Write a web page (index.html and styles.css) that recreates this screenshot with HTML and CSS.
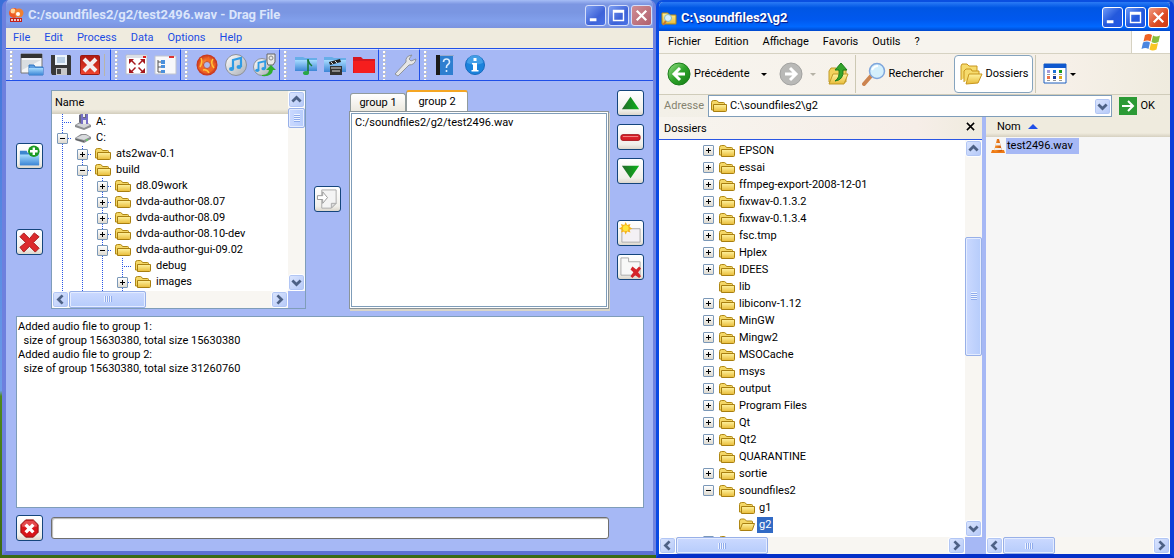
FILE: index.html
```html
<!DOCTYPE html>
<html lang="en">
<head>
<meta charset="utf-8">
<title>Drag File</title>
<link rel="stylesheet" href="styles.css">
</head>
<body>
<svg class="defs" aria-hidden="true">
  <defs>
    <linearGradient id="gold" x1="0" y1="0" x2="0" y2="1"><stop offset="0" stop-color="#fff3a0"/><stop offset="1" stop-color="#e8bb38"/></linearGradient>
    <linearGradient id="sky" x1="0" y1="0" x2="0" y2="1"><stop offset="0" stop-color="#a8dcff"/><stop offset="1" stop-color="#3c86d6"/></linearGradient>
    <linearGradient id="redg" x1="0" y1="0" x2="0" y2="1"><stop offset="0" stop-color="#b01810"/><stop offset="1" stop-color="#f0452f"/></linearGradient>
    <linearGradient id="greeng" x1="0" y1="0" x2="1" y2="1"><stop offset="0" stop-color="#9be08a"/><stop offset=".5" stop-color="#2da329"/><stop offset="1" stop-color="#137c14"/></linearGradient>
    <linearGradient id="darkgreen" x1="0" y1="0" x2="1" y2="0"><stop offset="0" stop-color="#23672b"/><stop offset="1" stop-color="#0bb51a"/></linearGradient>
    <linearGradient id="silver" x1="0" y1="0" x2="1" y2="1"><stop offset="0" stop-color="#ffffff"/><stop offset="1" stop-color="#a9aeb5"/></linearGradient>
    <radialGradient id="fire"><stop offset="0" stop-color="#ffd040"/><stop offset=".5" stop-color="#f4772c"/><stop offset="1" stop-color="#c5301c"/></radialGradient>
    <linearGradient id="cone" x1="0" y1="0" x2="1" y2="0"><stop offset="0" stop-color="#ff9a2e"/><stop offset="1" stop-color="#c94f00"/></linearGradient>
    <symbol id="folder" viewBox="0 0 16 16"><path d="M.5 12V4.500q0-2 2-2h3q1 0 2 2h5q1 0 1 1v7z" fill="#f4d767" stroke="#b08814"/><path d="M2.500 6.500h13v6q0 1-1 1h-12z" fill="url(#gold)" stroke="#a87f10"/></symbol>
    <symbol id="folder-open" viewBox="0 0 16 16"><path d="M.5 12V4q0-2 2-2h3l2 2h5q1 0 1 1v2" fill="#f4d767" stroke="#b08814"/><path d="M3.500 6.500h12l-2 6q0 1-1 1h-11q-1 0-.5-1z" fill="url(#gold)" stroke="#a87f10"/></symbol>
    <symbol id="drive" viewBox="0 0 16 16"><path d="M0 8l6-4h5l5 3v2l-7 4-9-3z" fill="#8c8e92"/><path d="M1 8l6-3h4l4 2-6 3z" fill="#d8dadd"/><path d="M1 9l8 2v1L1 10z" fill="#55585c"/><path d="M11 10h2" stroke="#4f4"/></symbol>
    <symbol id="floppy-drive" viewBox="0 0 16 16"><path d="M0 11l5-3h6l5 3v2l-7 3-9-3z" fill="#8c8e92"/><path d="M1 11l5-2h6l3 2-6 3z" fill="#d2d4d8"/><path d="M4 1l2-1h7v10H6l-2-2z" fill="#68697c"/><path d="M6 0h2v4h3V0h2v10H6z" fill="#7770c6"/><path d="M8 0h2v3H8zM8 6h3v4H8z" fill="#eee"/></symbol>
    <symbol id="left" viewBox="0 0 8 8"><path d="M5.500 1L2.500 4l3 3" fill="none" stroke="#4d6185" stroke-width="2"/></symbol>
    <symbol id="right" viewBox="0 0 8 8"><path d="M2.500 1l3 3-3 3" fill="none" stroke="#4d6185" stroke-width="2"/></symbol>
    <symbol id="up" viewBox="0 0 8 8"><path d="M1 5.500l3-3 3 3" fill="none" stroke="#4d6185" stroke-width="2"/></symbol>
    <symbol id="down" viewBox="0 0 8 8"><path d="M1 2.500l3 3 3-3" fill="none" stroke="#4d6185" stroke-width="2"/></symbol>
    <symbol id="min" viewBox="0 0 20 20"><path d="M4 13h7v3H4z" fill="#fff"/></symbol>
    <symbol id="max" viewBox="0 0 20 20"><path d="M4 4h12v12H4zM5.500 7v7.500h9V7z" fill="#fff" fill-rule="evenodd"/></symbol>
    <symbol id="close" viewBox="0 0 20 20"><path d="M5 5l10 10M15 5L5 15" stroke="#fff" stroke-width="2.400"/></symbol>
    <symbol id="note" viewBox="0 0 24 24"><path d="M9 16V7l8-2v9" fill="none" stroke="#2f9be4" stroke-width="2.200"/><ellipse cx="7.500" cy="16" rx="2.500" ry="2" fill="#2f9be4"/><ellipse cx="15" cy="14" rx="2.500" ry="2" fill="#2f9be4"/></symbol>
  </defs>
</svg>

<div class="desktop">
<section class="window app">
  <header class="titlebar">
    <svg class="i16" viewBox="0 0 16 16"><circle cx="6" cy="6" r="5" fill="#ef5a24"/><circle cx="5" cy="4" r="2.500" fill="#ffd9a0"/><circle cx="11" cy="6" r="4.500" fill="#f08030"/><circle cx="10" cy="7" r="2" fill="#fff"/><path d="M2 11h12v4H2z" fill="#c42018"/><path d="M3 13h10" stroke="#fff" stroke-width="1.500" stroke-dasharray="2 1"/></svg>
    <h1>C:/soundfiles2/g2/test2496.wav - Drag File</h1>
    <div class="winbtns">
      <button aria-label="Minimize"><svg><use href="#min"/></svg></button>
      <button aria-label="Maximize"><svg><use href="#max"/></svg></button>
      <button class="x" aria-label="Close"><svg><use href="#close"/></svg></button>
    </div>
  </header>
  <nav class="menu"><button>File</button><button>Edit</button><button>Process</button><button>Data</button><button>Options</button><button>Help</button></nav>
  <div class="toolbar">
    <div class="group sep">
      <button aria-label="Open"><svg viewBox="0 0 24 24"><path d="M1 1h21v19H1z" fill="#f4f5f6" stroke="#777"/><path d="M1 1h21v4H1z" fill="#333"/><path d="M2 7h19L2 17z" fill="#d9dde0"/><path d="M9 22V12h5l1 2h8v8z" fill="#5d9fe2" stroke="#2f74c0"/><path d="M9 15h14v7H9z" fill="url(#sky)"/></svg></button>
      <button aria-label="Save"><svg viewBox="0 0 24 24"><path d="M2 2h19l1 1v19H3l-1-2z" fill="#383838"/><path d="M6 2h12v10H6z" fill="#eef4fa"/><path d="M8 5h8M8 7h8M8 9h8" stroke="#86aacd"/><path d="M7 15h11v7H7z" fill="#c8c8c8"/><path d="M8 16h4v5H8z" fill="#444"/></svg></button>
      <button aria-label="Close file"><svg viewBox="0 0 24 24"><rect x="2.500" y="2.500" width="19" height="19" rx="1" fill="url(#redg)" stroke="#981b14"/><path d="M6 6l12 12M18 6L6 18" stroke="#f2efef" stroke-width="4"/></svg></button>
    </div>
    <div class="group">
      <button aria-label="Full screen"><svg viewBox="0 0 24 24"><path d="M1 2h21v19H1z" fill="#fff" stroke="#b8bcc8"/><path d="M2 3h19v2H2z" fill="#dcdfe6"/><path d="M18 3h3v2h-3z" fill="#e02020"/><path d="M4 6h5L7.500 7.500 11 11l-1 1-3.500-3.500L4 11zM20 6v5l-2.500-2.500L14 12l-1-1 3.500-3.500L15 6zM4 20v-5l2.500 2.500L10 14l1 1-3.500 3.500L9 20zM20 20v-5l-2.500 2.500L14 14l-1 1 3.500 3.500L15 20z" fill="#a6171c"/></svg></button>
      <button aria-label="Tree view"><svg viewBox="0 0 24 24"><path d="M1 3h21v18H1z" fill="#f8f8fa" stroke="#c0c4cf"/><path d="M15 3h5v2h-5z" fill="#d33"/><path d="M4 7v12h4M4 9h4M4 14h4" fill="none" stroke="#555"/><path d="M7 7h4v4H7zM7 12h4v3H7zM7 17h4v3H7z" fill="#4a90dc"/></svg></button>
    </div>
    <div class="group">
      <button aria-label="Burn"><svg viewBox="0 0 24 24"><circle cx="12" cy="12" r="10.500" fill="url(#fire)"/><path d="M3 15q2-6 4-8 0 4 3 5 0-5 4-9 0 5 3 6 1 3 4 1-1 7-7 10-6 2-11-5z" fill="#f26522" opacity=".8"/><path d="M6 5q2 4-1 9M18 6q-3 4 1 9M8 17q4-1 6 3" stroke="#ffc23a" stroke-width="1.500" fill="none"/><circle cx="12" cy="12" r="3.500" fill="#aeb8ea" stroke="#c9502c"/></svg></button>
      <button aria-label="Audio disc"><svg viewBox="0 0 24 24"><circle cx="12" cy="12" r="10.500" fill="url(#silver)" stroke="#8d9199"/><use href="#note" width="24" height="24"/></svg></button>
      <button aria-label="Extract audio"><svg viewBox="0 0 24 24"><circle cx="9" cy="14" r="8.500" fill="url(#silver)" stroke="#8d9199"/><use href="#note" x="-2" y="4" width="20" height="20"/><path d="M14 1h8v8l-2 3h-5l-1-3z" fill="#e8e8e8" stroke="#666"/><circle cx="18" cy="5" r="2" fill="none" stroke="#888"/><path d="M9 22q7 0 7-5h-3l5-5 5 5h-3q-1 7-11 6z" fill="#2fae2f"/></svg></button>
    </div>
    <div class="group">
      <button aria-label="Music folder"><svg viewBox="0 0 24 24"><path d="M1 4h8l2 1h12v13H1z" fill="#67aee8"/><path d="M1 7h22v11H1z" fill="url(#sky)"/><path d="M14 6v14" stroke="#167a35" stroke-width="1.500"/><path d="M14 7q1 4 4 6" stroke="#167a35" stroke-width="1.500" fill="none"/><ellipse cx="12" cy="20" rx="3" ry="2" fill="#28a745"/></svg></button>
      <button aria-label="Video folder"><svg viewBox="0 0 24 24"><path d="M1 4h8l2 1h12v14H1z" fill="#67aee8"/><path d="M1 7h22v12H1z" fill="url(#sky)"/><path d="M7 13h12v9H7z" fill="#333"/><path d="M6 9l11-3 1 3-11 3z" fill="#222"/><path d="M8 9l2 2M12 8l2 2M8 15h10M9 18h8" stroke="#ddd"/></svg></button>
      <button aria-label="Red folder"><svg viewBox="0 0 24 24"><path d="M1 4h8l2 2h12v14H1z" fill="#d51820"/><path d="M1 8h22l-1 12H2z" fill="#f51e1e"/></svg></button>
    </div>
    <div class="group">
      <button aria-label="Settings"><svg viewBox="0 0 24 24"><path d="M2 21l11-12q-1-6 6-7l-3 4 2 2 5-2q-1 6-7 6L5 23z" fill="#e6e6e6" stroke="#8e939c"/></svg></button>
    </div>
    <div class="group last">
      <button aria-label="Manual"><svg viewBox="0 0 24 24"><path d="M3 2h16v20H3z" fill="#2e7fd0"/><path d="M2 2h4v20H2z" fill="#1a1a1a"/><path d="M6 2h14v1H6z" fill="#9ac"/><path d="M9.500 9q0-3 3-3t3 3q0 1.500-1.500 2.500T12.500 14v1M12.500 17v2" stroke="#d8ecff" stroke-width="1.600" fill="none"/></svg></button>
      <button aria-label="About"><svg viewBox="0 0 24 24"><circle cx="12" cy="12" r="9.500" fill="#1a82dc" stroke="#1669bd"/><path d="M4 10a8 8 0 0116 0q-8 3-16 0z" fill="#5bb0f0" opacity=".6"/><path d="M10.500 5h3v3h-3zM9 10h5v7h1.500v1.500H8.500V17H10v-5.500H9z" fill="#fff"/></svg></button>
    </div>
  </div>

  <main class="work">
    <div class="side">
      <button class="push" aria-label="Add folder"><svg viewBox="0 0 24 24"><path d="M2 6h7l1 2h12v13H2z" fill="#3d86cf"/><path d="M2 10h20v11H2z" fill="url(#sky)"/><circle cx="16.500" cy="6.500" r="6" fill="#1d9a22"/><path d="M16.500 2.500v8M12.500 6.500h8" stroke="#fff" stroke-width="2.500"/></svg></button>
      <button class="push" aria-label="Delete"><svg viewBox="0 0 24 24"><path d="M6 2l6 6 5-6 5 4-6 6 6 6-4 4-6-6-6 6-4-5 6-5-6-6z" fill="#dc2a2c" stroke="#a81a1c"/></svg></button>
    </div>

    <div class="filetree">
      <div class="treemain">
        <div class="colhead">Name</div>
        <ul class="tree">
          <li><i class="v h"></i><svg><use href="#floppy-drive"/></svg>A:</li>
          <li><i class="v h m"></i><svg><use href="#drive"/></svg>C:</li>
          <li><i class="v"></i><i class="v h p"></i><svg><use href="#folder"/></svg>ats2wav-0.1</li>
          <li><i class="v"></i><i class="v h m"></i><svg><use href="#folder"/></svg>build</li>
          <li><i class="v"></i><i class="v"></i><i class="v h p"></i><svg><use href="#folder"/></svg>d8.09work</li>
          <li><i class="v"></i><i class="v"></i><i class="v h p"></i><svg><use href="#folder"/></svg>dvda-author-08.07</li>
          <li><i class="v"></i><i class="v"></i><i class="v h p"></i><svg><use href="#folder"/></svg>dvda-author-08.09</li>
          <li><i class="v"></i><i class="v"></i><i class="v h p"></i><svg><use href="#folder"/></svg>dvda-author-08.10-dev</li>
          <li><i class="v"></i><i class="v"></i><i class="v h m"></i><svg><use href="#folder"/></svg>dvda-author-gui-09.02</li>
          <li><i class="v"></i><i class="v"></i><i class="v"></i><i class="v h"></i><svg><use href="#folder"/></svg>debug</li>
          <li><i class="v"></i><i class="v"></i><i class="v"></i><i class="v h p"></i><svg><use href="#folder"/></svg>images</li>
          <li><i class="v"></i><i class="v"></i><i class="v"></i><i class="v"></i><svg><use href="#folder"/></svg></li>
        </ul>
      </div>
      <div class="sb vert"><button aria-label="Scroll up"><svg><use href="#up"/></svg></button><span class="thumb short"></span><span class="rest"></span><button aria-label="Scroll down"><svg><use href="#down"/></svg></button></div>
      <div class="sb horiz"><button aria-label="Scroll left"><svg><use href="#left"/></svg></button><span class="thumb t1"></span><span class="rest"></span><button aria-label="Scroll right"><svg><use href="#right"/></svg></button></div>
      <div class="corner"></div>
    </div>

    <div class="side">
      <button class="push" aria-label="Add to group"><svg viewBox="0 0 24 24"><path d="M6 2h15v14l-5 5H6z" fill="#f4f4f4" stroke="#aaa"/><path d="M21 16h-5v5z" fill="#ddd" stroke="#aaa"/><path d="M1.500 8H7V4l5 6-5 6v-4H1.500z" fill="#fff" stroke="#999"/></svg></button>
    </div>

    <div class="groups">
      <div class="tabs" role="tablist"><button role="tab">group 1</button><button role="tab" class="on" aria-selected="true">group 2</button></div>
      <div class="panel"><div class="list">C:/soundfiles2/g2/test2496.wav</div></div>
    </div>

    <div class="side top">
      <button class="push" aria-label="Move up"><svg viewBox="0 0 24 24"><path d="M12 5l9 13H3z" fill="url(#darkgreen)"/></svg></button>
      <button class="push" aria-label="Remove"><svg viewBox="0 0 24 24"><rect x="2" y="9" width="20" height="6" rx="2" fill="#d81e28" stroke="#a31118"/><path d="M4 11h16" stroke="#f58a8a"/></svg></button>
      <button class="push" aria-label="Move down"><svg viewBox="0 0 24 24"><path d="M12 19L3 6h18z" fill="url(#darkgreen)"/></svg></button>
      <button class="push new" aria-label="New group"><svg viewBox="0 0 24 24"><path d="M3 7h19v14H3z" fill="#f3f0f4" stroke="#aaa"/><path d="M7 0l1.500 3L12 2l-1 3 3 2-3 1 1 3-3.500-1L7 13l-1.500-3L2 11l1-3-3-1 3-2-1-3 3.500 1z" fill="#f6b51c"/><circle cx="7" cy="6.500" r="3" fill="#ffe63b"/></svg></button>
      <button class="push" aria-label="Delete group"><svg viewBox="0 0 24 24"><path d="M2 2h8v4h12v14H2z" fill="#f8f8f8" stroke="#aaa"/><path d="M14 11l4 3 3-3 2 2-3 4 3 4-2 2-4-3-3 3-2-2 3-4-3-3z" fill="#d4252b"/></svg></button>
    </div>

    <textarea class="log" readonly aria-label="Log">Added audio file to group 1:
  size of group 15630380, total size 15630380
Added audio file to group 2:
  size of group 15630380, total size 31260760</textarea>

    <button class="push stop" aria-label="Stop"><svg viewBox="0 0 24 24"><path d="M8 3h8l5 5v8l-5 5H8l-5-5V8z" fill="#d8141a" stroke="#8e1212"/><path d="M4 10V8l4-4h8l4 4v2q-8 3-16 0z" fill="#f08080" opacity=".5"/><path d="M8 8l8 8M16 8l-8 8" stroke="#fff" stroke-width="3.500"/></svg></button>
    <input class="progress" type="text" aria-label="Progress">
  </main>
</section>

<section class="window explorer" lang="fr">
  <header class="titlebar">
    <svg class="i16" viewBox="0 0 16 16"><path d="M1 3h6l1 2h7v9H1z" fill="url(#gold)" stroke="#b08814"/><circle cx="7" cy="8" r="3.500" fill="#d4efff" stroke="#8bb"/><path d="M5 11l-3 4" stroke="#c87830" stroke-width="2"/></svg>
    <h1>C:\soundfiles2\g2</h1>
    <div class="winbtns">
      <button aria-label="Réduire"><svg><use href="#min"/></svg></button>
      <button aria-label="Agrandir"><svg><use href="#max"/></svg></button>
      <button class="x" aria-label="Fermer"><svg><use href="#close"/></svg></button>
    </div>
  </header>
  <nav class="menu"><button>Fichier</button><button>Edition</button><button>Affichage</button><button>Favoris</button><button>Outils</button><button>?</button>
    <span class="flag"><svg viewBox="0 0 20 18"><path d="M4 2q4-2 7 0L9.500 8.500q-3-2-7 0z" fill="#ee6325"/><path d="M12 2.500q3 2 7 0L17.500 9q-4 2-7 0z" fill="#86bd3c"/><path d="M2 9.500q4-2 7 0L7.500 16q-3-2-7 0z" fill="#4a86e0"/><path d="M10 10q3 2 7 0l-1.500 6.500q-4 2-7 0z" fill="#f9c623"/></svg></span>
  </nav>
  <div class="navbar">
    <button class="back"><svg class="i24" viewBox="0 0 24 24"><circle cx="12" cy="12" r="11" fill="url(#greeng)" stroke="#1b7d1c"/><path d="M13 6l-6 6 6 6M7 12h11" fill="none" stroke="#fff" stroke-width="3"/></svg>Précédente<span class="caret"></span></button>
    <button class="fwd" aria-label="Suivante"><svg class="i24" viewBox="0 0 24 24"><circle cx="12" cy="12" r="11" fill="#b9b9b7" stroke="#a2a2a0"/><path d="M11 6l6 6-6 6M17 12H6" fill="none" stroke="#fff" stroke-width="3"/></svg><span class="caret dim"></span></button>
    <button class="parent" aria-label="Dossier parent"><svg class="i24" viewBox="0 0 24 24"><path d="M3 20V9l2-3h5l2 2h8v12z" fill="#f2d25c" stroke="#c09a28"/><path d="M3 22l4-10h15l-4 10z" fill="url(#gold)" stroke="#c09a28"/><path d="M9 19q5-3 4-11H9l6-7 6 7h-4q1 10-8 11z" fill="#34a52c" stroke="#1d7d1a"/></svg></button>
    <button class="search"><svg class="i24" viewBox="0 0 24 24"><path d="M9 14l-7 8" stroke="#cc8450" stroke-width="4" stroke-linecap="round"/><circle cx="15" cy="9" r="7.500" fill="#d3effc" stroke="#7fa6dc" stroke-width="1.500"/><path d="M10 8q2-4 6-4" stroke="#fff" stroke-width="2" fill="none"/></svg>Rechercher</button>
    <button class="folders"><svg class="i24" viewBox="0 0 24 24"><path d="M2 18V4l1-2h5l2 2h8v5" fill="#f6db6d" stroke="#c8961e"/><path d="M5 20V9l2-2h5l1 2h7v3" fill="#f6db6d" stroke="#c8961e"/><path d="M7 22l3-10h13l-4 9z" fill="url(#gold)" stroke="#c8961e"/></svg>Dossiers</button>
    <button class="views" aria-label="Affichages"><svg class="i24" viewBox="0 0 24 24"><path d="M1 2h22v19H1z" fill="#fff" stroke="#1d5fc0"/><path d="M1 2h22v4H1z" fill="#0f58ce"/><path d="M4 8h3v3H4z" fill="#a59bd8"/><path d="M10 8h3v3h-3z" fill="#1a72d8"/><path d="M16 8h3v3h-3z" fill="#189a1c"/><path d="M4 14h3v3H4z" fill="#ec7048"/><path d="M10 14h3v3h-3z" fill="#123a9a"/><path d="M16 14h3v3h-3z" fill="#dfa91c"/><path d="M4 12.500h3m3 0h3m3 0h3M4 18.500h3m3 0h3m3 0h3" stroke="#999"/></svg><span class="caret"></span></button>
  </div>
  <div class="address">
    <label for="addr">Adresse</label>
    <div class="combo"><svg class="i16"><use href="#folder"/></svg><input id="addr" type="text" value="C:\soundfiles2\g2"><button class="drop" aria-label="Ouvrir la liste"><svg><use href="#down"/></svg></button></div>
    <button class="go"><svg viewBox="0 0 18 18"><path d="M0 0h18v18H0z" fill="#2b9a35"/><path d="M3 9h11M9 4l5 5-5 5" fill="none" stroke="#fff" stroke-width="2"/></svg>OK</button>
  </div>
  <div class="panes">
    <div class="folderpane">
      <div class="panehead"><span>Dossiers</span><button aria-label="Fermer le volet"><svg viewBox="0 0 10 10"><path d="M1 1l8 8M9 1L1 9" stroke="#000" stroke-width="1.700"/></svg></button></div>
      <ul class="tree flat">
        <li><i class="p"></i><svg><use href="#folder"/></svg>EPSON</li>
        <li><i class="p"></i><svg><use href="#folder"/></svg>essai</li>
        <li><i class="p"></i><svg><use href="#folder"/></svg>ffmpeg-export-2008-12-01</li>
        <li><i class="p"></i><svg><use href="#folder"/></svg>fixwav-0.1.3.2</li>
        <li><i class="p"></i><svg><use href="#folder"/></svg>fixwav-0.1.3.4</li>
        <li><i class="p"></i><svg><use href="#folder"/></svg>fsc.tmp</li>
        <li><i class="p"></i><svg><use href="#folder"/></svg>Hplex</li>
        <li><i class="p"></i><svg><use href="#folder"/></svg>IDEES</li>
        <li><i></i><svg><use href="#folder"/></svg>lib</li>
        <li><i class="p"></i><svg><use href="#folder"/></svg>libiconv-1.12</li>
        <li><i class="p"></i><svg><use href="#folder"/></svg>MinGW</li>
        <li><i class="p"></i><svg><use href="#folder"/></svg>Mingw2</li>
        <li><i class="p"></i><svg><use href="#folder"/></svg>MSOCache</li>
        <li><i class="p"></i><svg><use href="#folder"/></svg>msys</li>
        <li><i class="p"></i><svg><use href="#folder"/></svg>output</li>
        <li><i class="p"></i><svg><use href="#folder"/></svg>Program Files</li>
        <li><i class="p"></i><svg><use href="#folder"/></svg>Qt</li>
        <li><i class="p"></i><svg><use href="#folder"/></svg>Qt2</li>
        <li><i></i><svg><use href="#folder"/></svg>QUARANTINE</li>
        <li><i class="p"></i><svg><use href="#folder"/></svg>sortie</li>
        <li><i class="m"></i><svg><use href="#folder"/></svg>soundfiles2</li>
        <li><i></i><i></i><svg><use href="#folder"/></svg>g1</li>
        <li><i></i><i></i><svg><use href="#folder-open"/></svg><b>g2</b></li>
        <li><i class="p"></i><svg><use href="#folder"/></svg></li>
      </ul>
      <div class="sb vert"><button aria-label="Défiler vers le haut"><svg><use href="#up"/></svg></button><span class="rest before"></span><span class="thumb long"></span><span class="rest after"></span><button aria-label="Défiler vers le bas"><svg><use href="#down"/></svg></button></div>
      <div class="sb horiz"><button aria-label="Défiler à gauche"><svg><use href="#left"/></svg></button><span class="thumb t2"></span><span class="rest"></span><button aria-label="Défiler à droite"><svg><use href="#right"/></svg></button></div>
      <div class="corner"></div>
    </div>
    <div class="filepane">
      <table>
        <thead><tr><th scope="col">Nom <span class="sort"></span></th></tr></thead>
        <tbody><tr><td><div class="file"><svg class="i16" viewBox="0 0 16 16"><path d="M2 12h12l1 3H1z" fill="#ee7a14"/><path d="M7 1h2l3 12q-4 2-8 0z" fill="url(#cone)"/><path d="M6 5h4l.7 2.500H5.300zM4.800 10h6.400l.6 2H4.200z" fill="#eee"/></svg><span>test2496.wav</span></div></td></tr></tbody>
      </table>
      <div class="sb horiz"><button aria-label="Défiler à gauche"><svg><use href="#left"/></svg></button><span class="thumb t3"></span><span class="rest"></span><button aria-label="Défiler à droite"><svg><use href="#right"/></svg></button></div>
    </div>
  </div>
</section>
</div>
</body>
</html>
```

FILE: styles.css
```css
* { box-sizing: border-box; }
html, body { height: 100%; }
body {
  margin: 0;
  overflow: hidden;
  font: 11px/14px Roboto, "Liberation Sans", sans-serif;
  color: #000;
  background: linear-gradient(#3a6fd8, #6c9ce8 70%, #4f8a1c 71%, #3c6a12);
}
button, input, textarea { font: inherit; color: inherit; margin: 0; padding: 0; border: 0; background: none; }
button { display: flex; align-items: center; justify-content: center; white-space: nowrap; }
ul { list-style: none; margin: 0; padding: 0; }
.defs { position: absolute; width: 0; height: 0; }
.i16 { width: 16px; height: 16px; flex: none; }
.i24 { width: 24px; height: 24px; flex: none; }

.desktop {
  height: 100vh;
  display: grid;
  grid-template-columns: minmax(0, 654fr) minmax(0, 518fr);
  padding-left: 2px;
}
.window { display: flex; flex-direction: column; min-height: 0; border-style: solid; border-radius: 7px 7px 0 0; overflow: hidden; }
.app { margin-bottom: 3px; border-width: 0 3px 4px 4px; border-color: #6c7fdc #6f83df #5d70d2 #6d80de; background: #a6b8f5; }
.explorer { border-width: 2px 4px 4px 3px; border-color: #0a4fe0 #0a3fd8 #0430c8 #0a4ae2; background: #efebde; }

.titlebar { display: flex; align-items: center; flex: none; padding: 2px 1px 0 2px; height: 28px; background: linear-gradient(#a6bdf6, #7c96e2 15%, #7a96e2 45%, #82a0ec 75%, #7b93df); }
.titlebar h1 { flex: 1; margin: 0 0 0 4px; font-size: 13px; line-height: 18px; font-weight: 700; color: #dbe5fb; white-space: nowrap; }
.explorer .titlebar { height: 29px; background: linear-gradient(#2b7bf5, #0056e4 20%, #0058ee 60%, #0068ff 85%, #0048cc); }
.explorer .titlebar h1 { color: #fff; text-shadow: 1px 1px 1px #0a1883; }
.winbtns { display: flex; gap: 2px; }
.winbtns button { width: 21px; height: 21px; border: 1px solid #d5defa; border-radius: 3px; background: linear-gradient(135deg, #7fa0f2, #3d62d8 60%, #4a72e6); }
.winbtns svg { width: 19px; height: 19px; }
.winbtns .x { background: linear-gradient(135deg, #d08d94, #b0606e); }
.explorer .winbtns button { border-color: #fff; background: linear-gradient(135deg, #6e9bf8, #2459dc 50%, #1f56e6); }
.explorer .winbtns .x { background: linear-gradient(135deg, #f09a80, #dd4a22 60%, #cf3c14); }

.menu { display: flex; flex: none; height: 20px; background: #efebde; }
.menu button { padding: 0 7px; }
.app .menu { color: #1b4be4; }
.explorer .menu { height: 23px; background: #f7f4ee; border-bottom: 1px solid #d6d2c2; padding: 0 0 0 2px; }
.flag { margin-left: auto; width: 39px; background: #fff; border-left: 1px solid #d6d2c2; display: flex; align-items: center; justify-content: center; }
.flag svg { width: 20px; height: 18px; }

.toolbar { display: flex; flex: none; height: 33px; border: solid #1f4fe8; border-width: 1px 0; background: #a6b8f5; }
.group { display: flex; align-items: center; padding-left: 11px; border-right: 1px solid #1f4fe8; border-top: 1px solid #d8e0fb; background: radial-gradient(circle at 1px 1px, #fff 1px, #9a9a9a 2px, transparent 2px) 4px 5px / 4px 4px repeat-y; }
.group.sep { padding-right: 6px; }
.group.last { flex: 1; border-right: 0; }
.group button { width: 29px; height: 28px; }
.group svg { width: 24px; height: 24px; }
.group.sep button:last-child { box-shadow: 4px 0 0 -3px #b9b5a8; }

.work {
  flex: 1;
  min-height: 0;
  display: grid;
  grid-template-columns: 27px minmax(0, 255fr) 27px minmax(0, 260fr) 27px;
  grid-template-rows: minmax(0, 218fr) minmax(0, 192fr) 26px;
  gap: 7px 8px;
  padding: 9px 9px 10px 10px;
}
.side { display: flex; flex-direction: column; align-items: center; justify-content: center; gap: 60px; }
.side.top { justify-content: flex-start; gap: 8px; }
.side .new { margin-top: 28px; }
.push { width: 27px; height: 26px; border: 1px solid #14457c; border-radius: 3px; background: linear-gradient(#fff, #f0efea 80%, #dcd6cc); }
.push svg { width: 23px; height: 23px; }

.filetree { display: grid; grid-template: minmax(0, 1fr) 17px / minmax(0, 1fr) 17px; border: 1px solid #7f9db9; background: #fff; }
.treemain { overflow: hidden; min-height: 0; }
.colhead { height: 23px; padding: 5px 3px 0; background: linear-gradient(#efebde 80%, #d2cdbc); }
.tree { overflow: hidden; }
.tree li { display: flex; align-items: center; height: 16px; white-space: nowrap; }
.tree li > svg { width: 16px; height: 16px; flex: none; margin: 0 5px 0 3px; }
.tree i { flex: none; width: 20px; height: 16px; background-repeat: no-repeat; display: flex; align-items: center; justify-content: center; }
.tree .v { background-image: repeating-linear-gradient(#2a56e4 0 1px, transparent 1px 2px); background-size: 1px 16px; background-position: 10px 0; }
.tree .v.h { background-image: repeating-linear-gradient(#2a56e4 0 1px, transparent 1px 2px), repeating-linear-gradient(90deg, #2a56e4 0 1px, transparent 1px 2px); background-size: 1px 16px, 10px 1px; background-position: 10px 0, 10px 8px; }
.tree .p::before, .tree .m::before {
  content: "";
  width: 9px;
  height: 9px;
  border: 1px solid #7b98b8;
  border-radius: 1px;
  background: linear-gradient(#000, #000) center / 5px 1px no-repeat, linear-gradient(#fff, #dedad0);
}
.tree .p::before { background: linear-gradient(#000, #000) center / 5px 1px no-repeat, linear-gradient(#000, #000) center / 1px 5px no-repeat, linear-gradient(#fff, #dedad0); }

.sb { display: flex; background: #f8f6f2; }
.sb.vert { flex-direction: column; }
.sb button, .drop { flex: none; width: 17px; height: 17px; border: 1px solid #fff; border-radius: 3px; background: linear-gradient(135deg, #dce6fe, #b4c8f8); box-shadow: inset 0 0 0 1px #b2c6f4; }
.sb button svg, .drop svg { width: 11px; height: 11px; }
.rest { flex: 1; }
.thumb { border: 1px solid #98b0e8; border-radius: 2px; box-shadow: inset 0 0 0 1px #e4ecff; background: repeating-linear-gradient(90deg, #edf3ff 0 1px, #8fabec 1px 2px) center / 8px 6px no-repeat, linear-gradient(#cbd9ff, #b6ccfb); }
.vert .thumb { background: repeating-linear-gradient(#edf3ff 0 1px, #8fabec 1px 2px) center / 6px 8px no-repeat, linear-gradient(90deg, #cbd9ff, #b6ccfb); }
.short { height: 20px; }
.t1 { width: 77px; }
.t2 { width: 92px; }
.t3 { width: 52px; }
.before { flex: 80; }
.long { flex: 118; }
.after { flex: 165; }
.corner { background: #a6b8f5; }

.groups { display: flex; flex-direction: column; min-height: 0; }
.tabs { display: flex; align-items: flex-end; height: 21px; padding-left: 1px; flex: none; }
.tabs button { width: 56px; height: 18px; border: 1px solid #919b9c; border-bottom: 0; border-radius: 3px 3px 0 0; background: linear-gradient(#fff, #ece9df); }
.tabs .on { width: 62px; height: 21px; border-top: 2px solid #f5a623; background: #fff; }
.panel { flex: 1; min-height: 0; padding: 1px; border: 1px solid #8a9499; background: #fff; box-shadow: 1px 2px 0 #d9d5c8; }
.list { height: 100%; border: 1px solid #7f9db9; padding: 2px 3px; }

.log { grid-column: 1 / -1; border: 1px solid #7f9db9; background: #fff; padding: 3px 1px; resize: none; width: 100%; height: 100%; line-height: 14px; }
.progress { grid-column: 2 / 5; height: 22px; align-self: center; border: 1px solid #6f6f6f; border-radius: 3px; background: #fff; box-shadow: inset 1px 1px 1px #b8b8b8; padding: 0 4px; width: 100%; }

.navbar { display: flex; flex: none; align-items: center; height: 41px; padding: 1px 8px; background: linear-gradient(90deg, #f7f4ee, #f6f0e8 80%, #efebde); border-bottom: 1px solid #d0ccba; }
.navbar button { gap: 3px; height: 38px; }
.navbar .search { gap: 3px; }
.caret { border: 3px solid transparent; border-top-color: #000; border-bottom: 0; margin-left: 8px; }
.dim { border-top-color: #b5b2a6; margin-left: 4px; }
.fwd { margin-left: 12px; }
.parent { margin-left: 10px; }
.navbar .search { border-left: 1px solid #cdc9b4; margin-left: 5px; padding-left: 6px; }
.navbar .folders { width: 79px; gap: 3px; margin-left: auto; border: 1px solid #86a4be; border-radius: 4px; background: #fff; }
.navbar .views { margin-left: 2px; margin-right: 86px; padding-left: 7px; border-left: 1px solid #cdc9b4; }
.views .caret { margin-left: 0; }

.address { display: flex; flex: none; align-items: center; height: 22px; background: linear-gradient(90deg, #f3f0e8, #efebde); padding-left: 5px; }
.address label { width: 44px; color: #84826f; }
.combo { flex: 1; display: flex; align-items: center; height: 22px; padding: 1px 0 1px 2px; border: 1px solid #7f9db9; background: #fff; }
.combo input { flex: 1; min-width: 0; margin-left: 3px; outline: 0; }
.go { gap: 4px; margin: 0 15px 0 7px; }
.go svg { width: 18px; height: 18px; }

.panes { flex: 1; min-height: 0; display: grid; grid-template-columns: minmax(0, 323fr) minmax(0, 184fr); gap: 4px; background: #a6b8f5; }
.folderpane { display: grid; min-height: 0; grid-template: 23px minmax(0, 1fr) 17px / minmax(0, 1fr) 17px; background: #fff; }
.panehead { grid-column: 1 / -1; display: flex; align-items: center; justify-content: space-between; padding: 1px 7px 0 5px; background: linear-gradient(90deg, #f7f4ee, #f6eee8 80%, #efebde); border-bottom: 1px solid #2a56e4; }
.panehead button { margin-bottom: 4px; }
.panehead button svg { width: 9px; height: 9px; }
.flat { padding: 2px 0 0 39px; }
.flat li { height: 17px; }
.flat li > svg { margin: 0 4px 0 1px; }
.flat b { font-weight: 400; background: #316ac5; color: #fff; padding: 1px 2px; margin-left: -2px; }
.filepane { display: flex; flex-direction: column; min-height: 0; background: #f6f6f6; }
.filepane table { width: 100%; border-collapse: collapse; margin-bottom: auto; }
.filepane th { height: 20px; padding: 0 11px; text-align: left; font-weight: 400; background: linear-gradient(#efebde 80%, #d5d0c0); }
.filepane td { padding: 1px 5px 0 4px; }
.sort { display: inline-block; border: 5px solid transparent; border-top: 0; border-bottom-color: #1f4fe8; margin-left: 4px; vertical-align: 1px; }
.file { display: flex; align-items: center; gap: 0; }
.file span { background: #a6b8f5; padding: 1px 6px 1px 1px; }
```
